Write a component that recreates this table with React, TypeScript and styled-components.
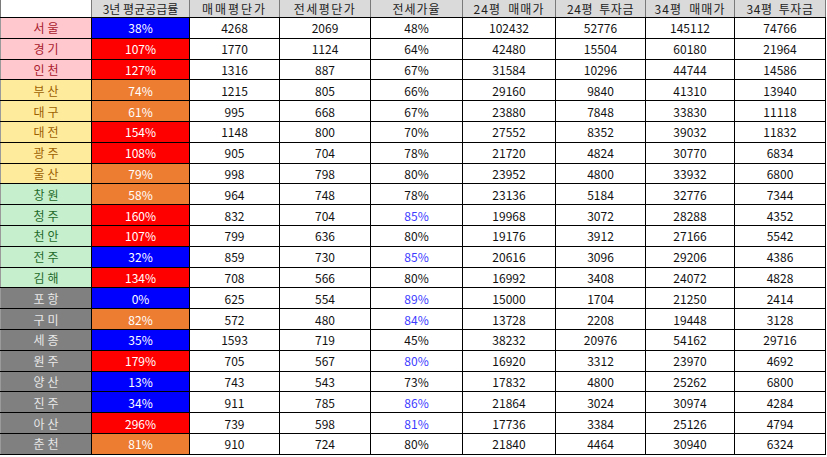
import React from "react";
import styled, { createGlobalStyle } from "styled-components";

const Global = createGlobalStyle`
  html, body { margin: 0; padding: 0; background: #ffffff; }
  body { font-family: "Noto Sans CJK KR", "DejaVu Sans", sans-serif; }
`;

type Group = "bad" | "neutral" | "good" | "gray";
type Supply = "low" | "mid" | "high";

const groupStyle: Record<Group, { bg: string; fg: string }> = {
  bad: { bg: "#ffc7ce", fg: "#a8202c" },
  neutral: { bg: "#ffeb9c", fg: "#9c5f00" },
  good: { bg: "#c6efce", fg: "#1f6b2a" },
  gray: { bg: "#808080", fg: "#e8e8e8" },
};

const supplyBg: Record<Supply, string> = {
  low: "#0000ff",
  mid: "#ed7d31",
  high: "#ff0000",
};

const Table = styled.table`
  border-collapse: collapse;
  table-layout: fixed;
  width: 825px;
  font-size: 12px;
  color: #111;
`;

const HeadCell = styled.th<{ $blank?: boolean; $spacing: number; $size: number }>`
  height: 17px;
  padding: 0;
  font-weight: normal;
  font-size: ${(p) => p.$size}px;
  text-align: center;
  letter-spacing: ${(p) => p.$spacing}px;
  color: #222;
  background: ${(p) => (p.$blank ? "#ffffff" : "#dadada")};
  border-left: 1px solid #7a7a7a;
  border-right: 1px solid #7a7a7a;
  border-bottom: 1px solid #000;
  white-space: pre;
`;

const Cell = styled.td<{ $blue?: boolean }>`
  height: 19.8px;
  padding: 0;
  text-align: center;
  border: 1px solid #000;
  color: ${(p) => (p.$blue ? "#3b3bff" : "#111")};
  white-space: nowrap;
`;

const RegionCell = styled.td<{ $group: Group }>`
  padding: 0;
  text-align: center;
  letter-spacing: 3px;
  text-indent: 3px;
  border: 1px solid #000;
  border-left: 1px solid #9a9a9a;
  background: ${(p) => groupStyle[p.$group].bg};
  color: ${(p) => groupStyle[p.$group].fg};
`;

const SupplyCell = styled.td<{ $level: Supply }>`
  padding: 0;
  text-align: center;
  border: 1px solid #000;
  background: ${(p) => supplyBg[p.$level]};
  color: #ffffff;
`;

type Row = [string, Group, number, number, number, number, boolean, number, number, number, number];

const rows: Row[] = [
  ["서울", "bad", 38, 4268, 2069, 48, false, 102432, 52776, 145112, 74766],
  ["경기", "bad", 107, 1770, 1124, 64, false, 42480, 15504, 60180, 21964],
  ["인천", "bad", 127, 1316, 887, 67, false, 31584, 10296, 44744, 14586],
  ["부산", "neutral", 74, 1215, 805, 66, false, 29160, 9840, 41310, 13940],
  ["대구", "neutral", 61, 995, 668, 67, false, 23880, 7848, 33830, 11118],
  ["대전", "neutral", 154, 1148, 800, 70, false, 27552, 8352, 39032, 11832],
  ["광주", "neutral", 108, 905, 704, 78, false, 21720, 4824, 30770, 6834],
  ["울산", "neutral", 79, 998, 798, 80, false, 23952, 4800, 33932, 6800],
  ["창원", "good", 58, 964, 748, 78, false, 23136, 5184, 32776, 7344],
  ["청주", "good", 160, 832, 704, 85, true, 19968, 3072, 28288, 4352],
  ["천안", "good", 107, 799, 636, 80, false, 19176, 3912, 27166, 5542],
  ["전주", "good", 32, 859, 730, 85, true, 20616, 3096, 29206, 4386],
  ["김해", "good", 134, 708, 566, 80, false, 16992, 3408, 24072, 4828],
  ["포항", "gray", 0, 625, 554, 89, true, 15000, 1704, 21250, 2414],
  ["구미", "gray", 82, 572, 480, 84, true, 13728, 2208, 19448, 3128],
  ["세종", "gray", 35, 1593, 719, 45, false, 38232, 20976, 54162, 29716],
  ["원주", "gray", 179, 705, 567, 80, true, 16920, 3312, 23970, 4692],
  ["양산", "gray", 13, 743, 543, 73, false, 17832, 4800, 25262, 6800],
  ["진주", "gray", 34, 911, 785, 86, true, 21864, 3024, 30974, 4284],
  ["아산", "gray", 296, 739, 598, 81, true, 17736, 3384, 25126, 4794],
  ["춘천", "gray", 81, 910, 724, 80, false, 21840, 4464, 30940, 6324],
];

const widths = [91, 98, 90, 91, 92, 93, 90, 89, 91];
const headers: { text: string; spacing: number; size: number }[] = [
  { text: "", spacing: 0, size: 12 },
  { text: "3년 평균공급률", spacing: 0, size: 12 },
  { text: "매매평단가", spacing: 2, size: 12 },
  { text: "전세평단가", spacing: 1.5, size: 12 },
  { text: "전세가율", spacing: 1, size: 12 },
  { text: "24평  매매가", spacing: 1, size: 12 },
  { text: "24평  투자금", spacing: 0.5, size: 12 },
  { text: "34평  매매가", spacing: 1, size: 12 },
  { text: "34평  투자금", spacing: 0.5, size: 12 },
];

const level = (v: number): Supply => (v < 50 ? "low" : v <= 100 ? "mid" : "high");

export default function App() {
  return (
    <>
      <Global />
      <Table>
        <colgroup>
          {widths.map((w, i) => (
            <col key={i} style={{ width: w }} />
          ))}
        </colgroup>
        <thead>
          <tr>
            {headers.map((h, i) => (
              <HeadCell key={i} $blank={i === 0} $spacing={h.spacing} $size={h.size}>
                {h.text}
              </HeadCell>
            ))}
          </tr>
        </thead>
        <tbody>
          {rows.map((r) => (
            <tr key={r[0]}>
              <RegionCell $group={r[1]}>{r[0]}</RegionCell>
              <SupplyCell $level={level(r[2])}>{r[2]}%</SupplyCell>
              <Cell>{r[3]}</Cell>
              <Cell>{r[4]}</Cell>
              <Cell $blue={r[6]}>{r[5]}%</Cell>
              <Cell>{r[7]}</Cell>
              <Cell>{r[8]}</Cell>
              <Cell>{r[9]}</Cell>
              <Cell>{r[10]}</Cell>
            </tr>
          ))}
        </tbody>
      </Table>
    </>
  );
}
